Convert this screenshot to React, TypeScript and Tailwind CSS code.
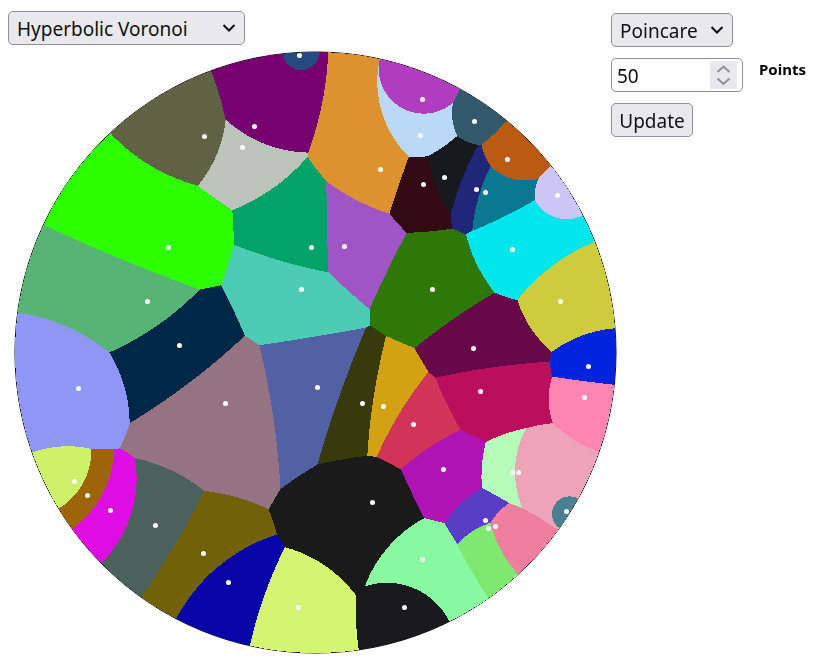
import { useEffect, useRef } from "react";

const SIZE = 604;
const CX = 301.5;
const CY = 301.5;
const R = 300.5;
// canvas sits at (14, 51) on the page
const OX = 14;
const OY = 51;

// x, y, colour, and for a few cells a tweaked x, y used for the region only
const seeds: [number, number, string, number?, number?][] = [
  [299, 55, "#264a7f"],
  [204, 136, "#5f6244"],
  [254, 126, "#760070"],
  [242, 147, "#bac4b9"],
  [380, 169, "#dd9230"],
  [422, 99, "#b03dbe"],
  [420, 135, "#b9d9f7"],
  [474, 121, "#32596c"],
  [507, 159, "#ba5a13"],
  [444, 177, "#16191e"],
  [423, 184, "#310a14"],
  [476, 189, "#20277b"],
  [485, 192, "#0a7890"],
  [557, 195, "#cdc5f6"],
  [512, 249, "#03e5ec"],
  [168, 247, "#2eff00"],
  [311, 247, "#02a268"],
  [344, 246, "#a055c6"],
  [301, 289, "#4dcbb4"],
  [147, 301, "#57b475"],
  [179, 345, "#002648"],
  [78, 388, "#8e97f5"],
  [225, 403, "#967383"],
  [317, 387, "#5261a3"],
  [362, 403, "#383a0c"],
  [383, 406, "#d2a212"],
  [432, 289, "#2e7808"],
  [473, 348, "#67084b"],
  [480, 391, "#bb0f5e"],
  [413, 424, "#d23358"],
  [560, 301, "#cfcb3f"],
  [588, 366, "#0024de"],
  [584, 397, "#fe85b1"],
  [443, 469, "#b013b4"],
  [512, 472, "#b5fdb9"],
  [518, 472, "#eda3b9"],
  [566, 511, "#4c8090"],
  [485, 520, "#583ec4"],
  [488, 528, "#7fe96f"],
  [495, 526, "#ee7f9f"],
  [372, 502, "#1b1a1b"],
  [422, 559, "#88f9a1"],
  [404, 607, "#1a1a1e"],
  [298, 607, "#d3f572"],
  [74, 481, "#cdf26a", 72, 484.3],
  [87, 495, "#9d6508", 87.3, 495],
  [110, 510, "#e00ce4", 110, 509.7],
  [155, 525, "#4c605c"],
  [203, 553, "#716108"],
  [228, 582, "#0905a8"],
];

function drawVoronoi(ctx: CanvasRenderingContext2D) {
  const pts = seeds.map(([x, y, c, cellX, cellY]) => {
    const u = ((cellX ?? x) - OX - CX) / R;
    const v = ((cellY ?? y) - OY - CY) / R;
    return {
      u,
      v,
      k: 1 - u * u - v * v,
      r: parseInt(c.slice(1, 3), 16),
      g: parseInt(c.slice(3, 5), 16),
      b: parseInt(c.slice(5, 7), 16),
    };
  });

  ctx.strokeStyle = "#000";
  ctx.lineWidth = 1;
  ctx.beginPath();
  ctx.arc(CX, CY, R, 0, Math.PI * 2);
  ctx.stroke();

  const img = ctx.getImageData(0, 0, SIZE, SIZE);
  for (let y = 0; y < SIZE; y++) {
    for (let x = 0; x < SIZE; x++) {
      const u = (x + 0.5 - CX) / R;
      const v = (y + 0.5 - CY) / R;
      if (u * u + v * v >= 0.9995) continue;
      let best = 0;
      let bestD = Infinity;
      for (let i = 0; i < pts.length; i++) {
        const p = pts[i];
        const du = u - p.u;
        const dv = v - p.v;
        // the other factors of the hyperbolic distance are the same for every seed
        const d = (du * du + dv * dv) / p.k;
        if (d < bestD) {
          bestD = d;
          best = i;
        }
      }
      const o = (y * SIZE + x) * 4;
      img.data[o] = pts[best].r;
      img.data[o + 1] = pts[best].g;
      img.data[o + 2] = pts[best].b;
      img.data[o + 3] = 255;
    }
  }
  ctx.putImageData(img, 0, 0);

  ctx.fillStyle = "#fff";
  for (const [x, y] of seeds) {
    ctx.beginPath();
    ctx.arc(x - OX + 0.5, y - OY + 0.5, 2.5, 0, Math.PI * 2);
    ctx.fill();
  }
}

function Chevron() {
  return (
    <svg width="14" height="14" viewBox="0 0 14 14" fill="none" stroke="#111" strokeWidth="2" className="pointer-events-none absolute top-[10px] right-[9px]">
      <path d="M1.5 4 L7 9.5 L12.5 4" />
    </svg>
  );
}

export default function App() {
  const canvasRef = useRef<HTMLCanvasElement>(null);

  useEffect(() => {
    const ctx = canvasRef.current?.getContext("2d");
    if (ctx) drawVoronoi(ctx);
  }, []);

  const control = "h-[34px] rounded-[5px] border border-[#8f8f9d] text-[19px] text-[#111]";

  return (
    <div className="flex h-[672px] w-[824px] overflow-hidden bg-white font-['Noto_Sans',sans-serif]">
      <div className="w-[611px] shrink-0 pt-[11px]">
        <div className="relative ml-[8px] w-[237px]">
          <select className={`${control} w-full appearance-none bg-[#e9e9ed] pt-[2px] pl-[8px] leading-[30px]`} defaultValue="voronoi">
            <option value="voronoi">Hyperbolic Voronoi</option>
          </select>
          <Chevron />
        </div>
        <canvas ref={canvasRef} width={SIZE} height={SIZE} className="mt-[6px] ml-[14px] block" />
      </div>
      <div className="z-10 flex w-[213px] flex-col items-start pt-[13px]">
        <div className="relative w-[122px]">
          <select className={`${control} w-full appearance-none bg-[#e9e9ed] pt-[2px] pl-[8px] leading-[30px]`} defaultValue="poincare">
            <option value="poincare">Poincare</option>
          </select>
          <Chevron />
        </div>
        <div className="mt-[11px] flex items-start">
          <div className="relative">
            <input
              type="number"
              defaultValue={50}
              className={`${control} w-[132px] appearance-none bg-white pt-[1px] pl-[5px] leading-[31px] [&::-webkit-inner-spin-button]:appearance-none`}
            />
            <div className="absolute top-[3px] right-[6px] h-[28px] w-[27px] bg-[#e9e9ed]">
              <svg width="27" height="28" viewBox="0 0 27 28" fill="none" stroke="#8f8f9d" strokeWidth="2">
                <path d="M7.5 11 L13.5 5.5 L19.5 11" />
                <path d="M7.5 17.5 L13.5 23 L19.5 17.5" />
              </svg>
            </div>
          </div>
          <span className="mt-[1px] ml-[16px] text-[15px] leading-[20px] font-bold text-black">Points</span>
        </div>
        <button className={`${control} mt-[11px] w-[82px] bg-[#e9e9ed] pt-[2px] text-center leading-[30px]`}>Update</button>
      </div>
    </div>
  );
}
